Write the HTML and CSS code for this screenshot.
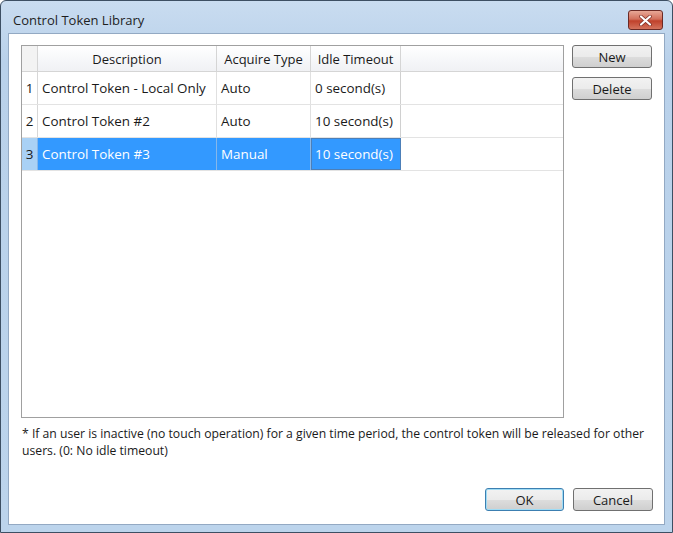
FILE: index.html
```html
<!DOCTYPE html>
<html lang="en">
<head>
    <meta charset="UTF-8">
    <title>Control Token Library</title>
    <link rel="stylesheet" href="styles.css">
</head>
<body>
    <div class="window">
        <div class="titlebar">
            <span class="title">Control Token Library</span>
            <button class="close" aria-label="Close">
                <svg width="13" height="11" viewBox="0 0 13 11">
                    <path d="M2 1.5 L11 9.5 M11 1.5 L2 9.5" stroke="#7a2a22" stroke-width="3.6" stroke-linecap="round"/>
                    <path d="M2 1.5 L11 9.5 M11 1.5 L2 9.5" stroke="#fff" stroke-width="2.2" stroke-linecap="round"/>
                </svg>
            </button>
        </div>

        <div class="client">
            <div class="main">
                <div class="grid">
                    <div class="row head">
                        <div class="cell num"></div>
                        <div class="cell desc">Description</div>
                        <div class="cell type">Acquire Type</div>
                        <div class="cell idle">Idle Timeout</div>
                        <div class="cell rest"></div>
                    </div>
                    <div class="row">
                        <div class="cell num">1</div>
                        <div class="cell desc">Control Token - Local Only</div>
                        <div class="cell type">Auto</div>
                        <div class="cell idle">0 second(s)</div>
                    </div>
                    <div class="row">
                        <div class="cell num">2</div>
                        <div class="cell desc">Control Token #2</div>
                        <div class="cell type">Auto</div>
                        <div class="cell idle">10 second(s)</div>
                    </div>
                    <div class="row selected">
                        <div class="cell num">3</div>
                        <div class="cell desc">Control Token #3</div>
                        <div class="cell type">Manual</div>
                        <div class="cell idle">10 second(s)</div>
                    </div>
                </div>

                <div class="side">
                    <button class="btn">New</button>
                    <button class="btn">Delete</button>
                </div>
            </div>

            <p class="note">* If an user is inactive (no touch operation) for a given time period, the control token will be released for other users. (0: No idle timeout)</p>

            <div class="footer">
                <button class="btn default">OK</button>
                <button class="btn">Cancel</button>
            </div>
        </div>
    </div>
</body>
</html>
```

FILE: styles.css
```css
html, body {
    margin: 0;
    padding: 0;
}

body {
    font-family: "Open Sans", "Noto Sans", sans-serif;
    font-size: 13px;
    color: #1a1a1a;
    background-color: #fff;
}

.window {
    width: 673px;
    height: 533px;
    box-sizing: border-box;
    border: 1px solid #3d4f63;
    border-radius: 6px 6px 0 0;
    background: linear-gradient(#c9dcf0, #b9d1ea 60px, #bcd4ec);
    display: flex;
    flex-direction: column;
}

.titlebar {
    height: 32px;
    display: flex;
    align-items: flex-start;
    justify-content: space-between;
    padding: 0 9px 0 12px;
}

.title {
    margin-top: 10px;
    font-size: 13px;
    color: #1e1e1e;
}

.close {
    margin-top: 9px;
    width: 35px;
    height: 20px;
    padding: 0;
    border: 1px solid #6b2a25;
    border-radius: 3px;
    background: linear-gradient(#e8a897, #d2705c 45%, #c0412b 55%, #d4735d);
    display: flex;
    align-items: center;
    justify-content: center;
}

.client {
    flex: 1;
    margin: 0 7px 7px;
    border: 1px solid #93a9c3;
    background-color: #fff;
    padding: 11px 11px 0 12px;
    display: flex;
    flex-direction: column;
}

.main {
    display: flex;
    gap: 8px;
}

.grid {
    width: 543px;
    height: 373px;
    box-sizing: border-box;
    border: 1px solid #a0a0a0;
    background-color: #fff;
    font-size: 13.4px;
}

.row {
    display: flex;
    height: 32px;
    border-bottom: 1px solid #e3e3e3;
}

.row.head {
    height: 25px;
    border-bottom: 1px solid #d5d5d5;
    font-size: 13px;
}

.cell {
    box-sizing: border-box;
    display: flex;
    align-items: center;
    padding-left: 4px;
    border-right: 1px solid #e0e0e0;
    white-space: nowrap;
}

.num {
    width: 16px;
    padding-left: 0;
    justify-content: center;
    background-color: #fff;
    border-right: 1px solid #d7d7d7;
}

.desc {
    width: 179px;
}

.type {
    width: 94px;
}

.idle {
    width: 90px;
    border-right: 1px solid #d0d0d0;
}

.head .cell {
    justify-content: center;
    padding-left: 0;
    background: linear-gradient(#ffffff, #f7f8fa 50%, #f0f1f4);
    border-right: 1px solid #d5d5d5;
}

.head .num {
    background: #f3f3f3;
}

.head .rest {
    flex: 1;
    border-right: none;
}

.selected .cell {
    background-color: #3399ff;
    color: #fff;
    border-right-color: #86b7ea;
}

.selected .num {
    background-color: #a9d1f5;
    color: #1a1a1a;
}

.selected .idle {
    background-color: #3399ff;
    outline: 1px solid #4c7fb8;
    outline-offset: -1px;
}

.side {
    display: flex;
    flex-direction: column;
    gap: 9px;
}

.btn {
    width: 80px;
    height: 23px;
    box-sizing: border-box;
    font-family: inherit;
    font-size: 13px;
    color: #1a1a1a;
    border: 1px solid #707070;
    border-radius: 3px;
    background: linear-gradient(#f2f2f2, #ebebeb 50%, #dddddd 51%, #cfcfcf);
    padding: 0;
}

.note {
    margin: 7px -4px 0 1px;
    font-size: 12.2px;
    line-height: 17px;
}

.footer {
    margin-top: auto;
    margin-bottom: 13px;
    display: flex;
    justify-content: flex-end;
    gap: 9px;
}

.btn.default {
    width: 79px;
    border-color: #3c7fb1;
    box-shadow: inset 0 0 0 1px #9fdcf5;
}
```
